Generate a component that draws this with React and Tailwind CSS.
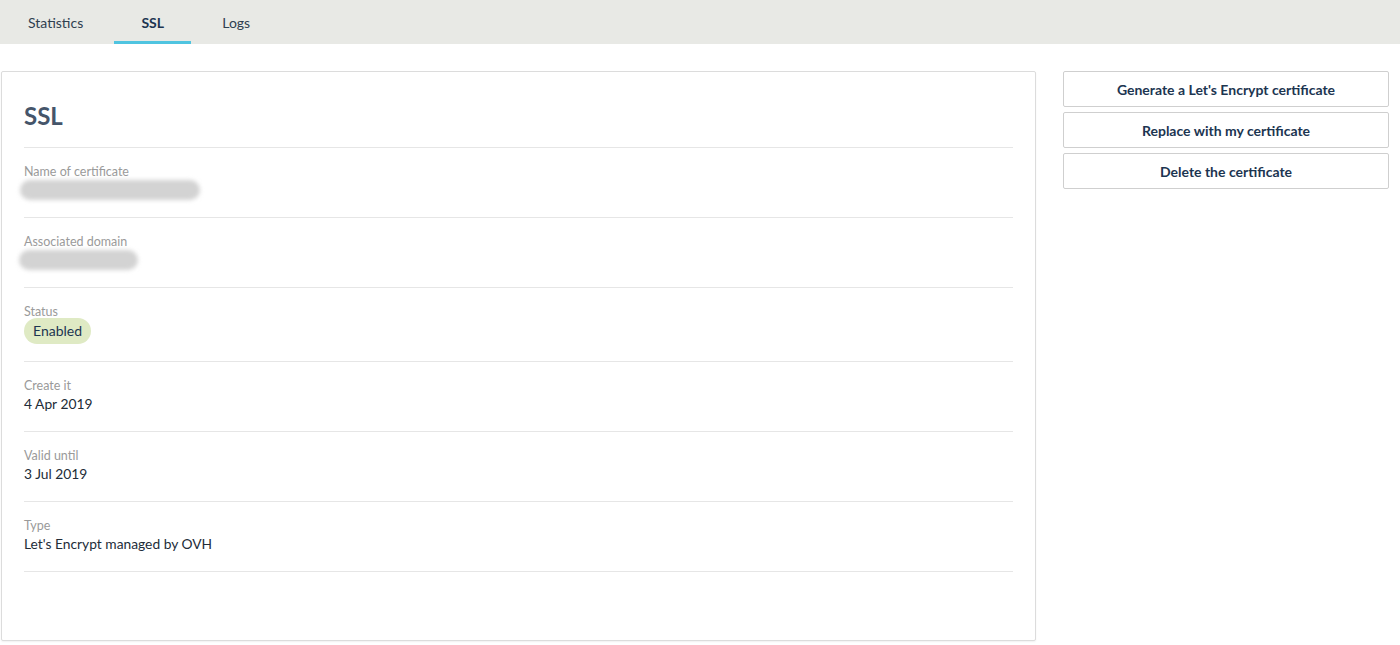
import React from "react";

const font = { fontFamily: "Lato, 'Noto Sans', sans-serif" };

function Row({ label, children, tall }) {
  return (
    <div className={`flex flex-col border-b border-[#e6e6e6] ${tall ? "h-[74px] pt-[16px]" : "h-[70px] pt-[16px]"}`}>
      <div className="text-[12.5px] leading-[16px] text-[#9a9a9a]">{label}</div>
      <div className={`${tall ? "-mt-[1px]" : "mt-0"} text-[13.8px] leading-[20px] text-[#222c38]`}>{children}</div>
    </div>
  );
}

export default function App() {
  return (
    <div className="min-h-[645px] w-[1400px] bg-white" style={font}>
      <div className="flex h-[44px] items-stretch bg-[#e8e9e5] pl-[14px]">
        <div className="flex items-center px-[14px] text-[14px] text-[#2f4050]">Statistics</div>
        <div className="ml-[17px] flex w-[77px] items-center justify-center border-b-[3px] border-[#4fc4e0] pt-[3px] text-[14px] font-bold text-[#1c3551]">SSL</div>
        <div className="ml-[17px] flex items-center px-[14px] text-[14px] text-[#2f4050]">Logs</div>
      </div>
      <div className="flex items-start gap-[27px] pt-[27px] pl-[1px]">
        <div className="h-[570px] w-[1035px] rounded-[2px] border border-[#dcdcdc] bg-white px-[22px] shadow-[0_1px_2px_rgba(0,0,0,0.06)]">
          <div className="flex h-[76px] items-end border-b border-[#e6e6e6] pb-[17px]">
            <h1 className="text-[24px] leading-[28px] font-bold text-[#45556a]">SSL</h1>
          </div>
          <Row label="Name of certificate">
            <div className="mt-[0px] -ml-[4px] h-[20px] w-[180px] rounded-full bg-[#d3d3d3] blur-[2px]" />
          </Row>
          <Row label="Associated domain">
            <div className="-ml-[5px] h-[20px] w-[119px] rounded-full bg-[#d3d3d3] blur-[2px]" />
          </Row>
          <Row label="Status" tall>
            <span className="-mt-[1px] inline-flex h-[26px] items-center rounded-full bg-[#dfeac4] px-[9px] text-[14px] text-[#1c3551]">Enabled</span>
          </Row>
          <Row label="Create it">4 Apr 2019</Row>
          <Row label="Valid until">3 Jul 2019</Row>
          <Row label="Type">Let's Encrypt managed by OVH</Row>
        </div>
        <div className="flex w-[326px] flex-col gap-[5px]">
          {["Generate a Let's Encrypt certificate", "Replace with my certificate", "Delete the certificate"].map((t) => (
            <button
              key={t}
              className="h-[36px] w-full rounded-[2px] border border-[#cfcfcf] bg-white text-[14px] font-bold text-[#1c3551]"
            >
              {t}
            </button>
          ))}
        </div>
      </div>
    </div>
  );
}
